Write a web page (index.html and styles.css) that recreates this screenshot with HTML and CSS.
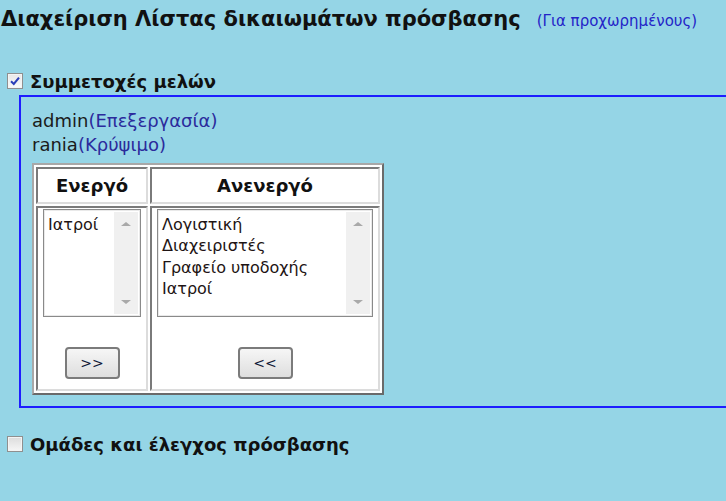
FILE: index.html
```html
<!DOCTYPE html>
<html lang="el">
<head>
<meta charset="utf-8">
<title>Διαχείριση Λίστας δικαιωμάτων πρόσβασης</title>
<link rel="stylesheet" href="styles.css">
</head>
<body>
<div class="page">
  <div class="header">
    <h1 class="title">Διαχείριση Λίστας δικαιωμάτων πρόσβασης</h1>
    <a class="adv" href="#">(Για προχωρημένους)</a>
  </div>

  <div class="section-label">
    <span class="cb checked"><svg viewBox="0 0 12 12" width="12" height="12"><path d="M2 6.2 L4.8 9 L10 2.6" fill="none" stroke="#2b3fb8" stroke-width="2"/></svg></span>
    <span class="label-text">Συμμετοχές μελών</span>
  </div>

  <div class="box">
    <div class="member">admin<span class="role">(Επεξεργασία)</span></div>
    <div class="member">rania<span class="role">(Κρύψιμο)</span></div>
    <table class="grid">
      <tr>
        <th class="col-a">Ενεργό</th>
        <th class="col-b">Ανενεργό</th>
      </tr>
      <tr>
        <td>
          <div class="listbox small">
            <div class="items"><div>Ιατροί</div></div>
            <div class="sbar"><span class="up"></span><span class="down"></span></div>
          </div>
          <button class="btn">&gt;&gt;</button>
        </td>
        <td>
          <div class="listbox wide">
            <div class="items">
              <div>Λογιστική</div>
              <div>Διαχειριστές</div>
              <div>Γραφείο υποδοχής</div>
              <div>Ιατροί</div>
            </div>
            <div class="sbar"><span class="up"></span><span class="down"></span></div>
          </div>
          <button class="btn">&lt;&lt;</button>
        </td>
      </tr>
    </table>
  </div>

  <div class="section-label second">
    <span class="cb"></span>
    <span class="label-text">Ομάδες και έλεγχος πρόσβασης</span>
  </div>
</div>
</body>
</html>
```

FILE: styles.css
```css
html, body {
  margin: 0;
  padding: 0;
  background: #95d5e6;
}
body {
  font-family: "DejaVu Sans", sans-serif;
  color: #111;
}
.page {
  width: 100%;
  height: 501px;
  overflow: hidden;
  padding-top: 7px;
  box-sizing: border-box;
}
.header {
  display: flex;
  align-items: baseline;
  gap: 16px;
  height: 27px;
  padding-left: 1px;
}
.title {
  margin: 0;
  font-size: 21px;
  font-weight: bold;
  color: #111;
  white-space: nowrap;
}
.adv {
  font-size: 15px;
  color: #2424c8;
  text-decoration: none;
  white-space: nowrap;
}
.section-label {
  display: flex;
  align-items: center;
  gap: 7px;
  margin: 36px 0 0 7px;
  height: 22px;
}
.section-label.second {
  margin-top: 25px;
}
.cb {
  width: 14px;
  height: 14px;
  border: 1px solid #8f8f8f;
  background: linear-gradient(#dcdcdc, #f6f6f6);
  box-shadow: inset 0 0 0 1px #f4f4f4;
  display: flex;
  align-items: center;
  justify-content: center;
}
.cb.checked {
  background: linear-gradient(#e8e8e8, #fafafa);
}
.label-text {
  font-size: 18px;
  font-weight: bold;
  white-space: nowrap;
}
.box {
  margin: 3px -20px 0 19px;
  border: 2px solid #1d1dff;
  padding: 12px 0 10px 11px;
  height: 287px;
}
.member {
  font-size: 18px;
  line-height: 24px;
  color: #1b1b1b;
}
.role {
  color: #2b2b9c;
}
.grid {
  margin-top: 6px;
  border-collapse: separate;
  border-spacing: 2px;
  background: #fff;
  border: 2px solid;
  border-color: #a8a8a8 #6a6a6a #6a6a6a #a8a8a8;
}
.grid th {
  font-size: 18px;
  font-weight: bold;
  height: 37px;
  border: 2px solid;
  border-color: #7a7a7a #dcdcdc #dcdcdc #7a7a7a;
  padding: 0;
  box-sizing: border-box;
}
.col-a { width: 112px; }
.col-b { width: 230px; }
.grid td {
  border: 2px solid;
  border-color: #7a7a7a #dcdcdc #dcdcdc #7a7a7a;
  padding: 1px 5px 9px 5px;
  vertical-align: top;
  height: 185px;
  box-sizing: border-box;
}
.listbox {
  display: flex;
  height: 108px;
  box-sizing: border-box;
  border: 1px solid #8a8a8a;
  background: #fff;
  box-shadow: inset 0 0 0 1px #e9e9e9;
}
.listbox.small { width: 98px; }
.listbox.wide { width: 216px; }
.items {
  flex: 1;
  padding: 4px 0 0 4px;
  font-size: 16px;
  line-height: 21.3px;
  color: #1e1414;
  white-space: nowrap;
}
.sbar {
  width: 24px;
  margin: 2px 2px 2px 0;
  background: #f0f0f0;
  position: relative;
}
.sbar .up, .sbar .down {
  position: absolute;
  left: 7px;
  width: 0;
  height: 0;
  border-left: 5px solid transparent;
  border-right: 5px solid transparent;
}
.sbar .up {
  top: 10px;
  border-bottom: 4px solid #a9a9a9;
}
.sbar .down {
  bottom: 10px;
  border-top: 4px solid #a9a9a9;
}
.btn {
  display: block;
  margin: 30px auto 0;
  width: 55px;
  height: 32px;
  border: 2px solid #7b7b7b;
  border-radius: 4px;
  background: linear-gradient(#f6f6f6, #dedede);
  font-family: "DejaVu Sans", sans-serif;
  font-size: 14px;
  color: #101838;
  padding: 0;
}
```
